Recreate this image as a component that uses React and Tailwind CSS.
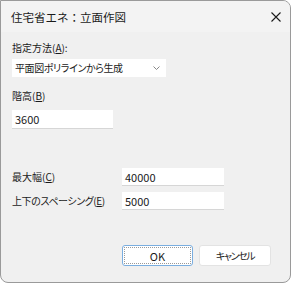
import React from "react";

const font = { fontFamily: '"Noto Sans CJK JP", "Noto Sans", sans-serif' };

export default function App() {
  return (
    <div className="w-[292px] h-[284px] bg-white" style={font}>
      <div className="w-[291px] h-[283px] border border-[#9a9a9a] rounded-tr-[8px] rounded-br-[8px] rounded-bl-[8px] bg-[#f0f0f0] overflow-hidden flex flex-col text-[#1a1a1a]">
        <div className="h-[31px] bg-[#f3f3f3] flex items-center justify-between pl-[10px] pr-[9px] shrink-0">
          <span className="text-[11.5px] leading-[16px] whitespace-nowrap">住宅省エネ：立面作図</span>
          <svg width="10" height="10" viewBox="0 0 10 10">
            <path d="M0.5 0.5L9.5 9.5M9.5 0.5L0.5 9.5" stroke="#1a1a1a" strokeWidth="1.1" />
          </svg>
        </div>
        <div className="flex flex-col pl-[11px] pt-[8px] text-[10px] leading-[16px] whitespace-nowrap [font-feature-settings:'palt']">
          <span>指定方法(<u>A</u>):</span>
          <div className="mt-[3px] w-[154px] h-[18px] bg-white flex items-center justify-between pl-[3px] pr-[6px]">
            <span className="tracking-[-0.4px]">平面図ポリラインから生成</span>
            <svg width="7" height="4" viewBox="0 0 7 4">
              <path d="M0.5 0.5L3.5 3.5L6.5 0.5" fill="none" stroke="#888" strokeWidth="1" />
            </svg>
          </div>
          <span className="mt-[11px]">階高(<u>B</u>)</span>
          <div className="mt-[6px] w-[101px] h-[19px] bg-white border-b border-[#d6d6d6] flex items-center pl-[3px] text-[11px]">3600</div>
          <div className="mt-[39px] flex items-center">
            <span className="w-[110px]">最大幅(<u>C</u>)</span>
            <div className="w-[102px] h-[18px] bg-white border-b border-[#d6d6d6] flex items-center pl-[3px] text-[11px]">40000</div>
          </div>
          <div className="mt-[6px] flex items-center">
            <span className="w-[110px] tracking-[-0.4px]">上下のスペーシング(<u>E</u>)</span>
            <div className="w-[102px] h-[18px] bg-white border-b border-[#d6d6d6] flex items-center pl-[3px] text-[11px]">5000</div>
          </div>
          <div className="mt-[35px] flex pl-[110px] gap-[6px]">
            <div className="w-[71px] h-[21px] bg-white border border-[#7aaee0] rounded-[3px] p-[1px]">
              <div className="w-full h-full border border-dotted border-[#9a9a9a] flex items-center justify-center text-[11px]">OK</div>
            </div>
            <div className="w-[72px] h-[21px] bg-white border border-[#e3e3e3] rounded-[3px] flex items-center justify-center tracking-[-1.4px]">キャンセル</div>
          </div>
        </div>
      </div>
    </div>
  );
}
